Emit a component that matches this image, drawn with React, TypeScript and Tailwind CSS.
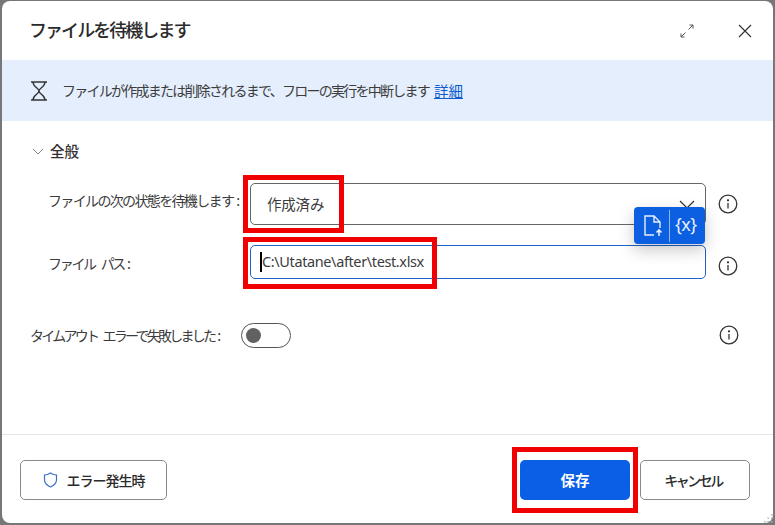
import React from 'react';

const cjk = 'font-["Noto_Sans_CJK_JP",sans-serif]';

function InfoIcon() {
    return (
        <svg width="20" height="20" viewBox="0 0 20 20" fill="none" stroke="#333" strokeWidth="1.3">
            <circle cx="10" cy="10" r="8.8" />
            <path d="M10 9v5.400" />
            <circle cx="10" cy="6.300" r="0.5" fill="#333" />
        </svg>
    );
}

function Hourglass() {
    return (
        <svg width="18" height="20" viewBox="0 0 18 20" fill="none" stroke="#333" strokeWidth="1.4">
            <path d="M1 1h16M1 19h16" />
            <path d="M3 1c0 5 6 6 6 9s-6 4-6 9M15 1c0 5-6 6-6 9s6 4 6 9" />
        </svg>
    );
}

function RedBox({ className }: { className: string }) {
    return <div className={`absolute border-[5px] border-[#f00000] ${className}`} />;
}

function Colon() {
    return <span className="ml-[3px] tracking-normal">:</span>;
}

export default function App() {
    return (
        <div className={`relative w-[775px] h-[525px] bg-[#777777] pt-[1px] px-[2px] pb-[2px] overflow-hidden ${cjk} text-[#323130]`}>
            <div className="flex flex-col h-full bg-white rounded-[8px] overflow-hidden">
                <div className="h-[59px] shrink-0 flex items-center pl-[27px] pr-[21px]">
                    <h1 className="text-[18px] font-medium tracking-[-1.95px] text-[#2b2b2b] -mt-[2px]">ファイルを待機します</h1>
                    <svg className="ml-auto mr-[44px]" width="14" height="14" viewBox="0 0 14 14" fill="none" stroke="#555" strokeWidth="1">
                        <path d="M8.500 5.500 13 1M9.500 1H13v3.500M5.500 8.500 1 13M1 9.500V13h3.500" />
                    </svg>
                    <svg width="14" height="14" viewBox="0 0 14 14" fill="none" stroke="#333" strokeWidth="1.2">
                        <path d="M1 1l12 12M13 1 1 13" />
                    </svg>
                </div>

                <div className="h-[61px] shrink-0 bg-[#e4eefd] flex items-center pl-[28px]">
                    <Hourglass />
                    <p className="ml-[14px] text-[14px] tracking-[-1.750px] text-[#3c3c3c] whitespace-nowrap">ファイルが作成または削除されるまで、フローの実行を中断します</p>
                    <a className="ml-[5px] text-[14.500px] text-[#0f5bd0] underline">詳細</a>
                </div>

                <div className="flex-1 flex flex-col pt-[20px]">
                    <div className="h-[20px] flex items-center pl-[30px]">
                        <svg width="12" height="7" viewBox="0 0 12 7" fill="none" stroke="#888" strokeWidth="1">
                            <path d="M1 1l5 5 5-5" />
                        </svg>
                        <span className="ml-[6px] text-[14.500px] font-medium">全般</span>
                    </div>

                    <div className="mt-[22px] flex items-center pl-[46px]">
                        <label className="w-[202px] text-[14px] tracking-[-1.650px] text-[#3c3c3c] whitespace-nowrap -mt-[8px]">ファイルの次の状態を待機します<Colon /></label>
                        <div className="w-[456px] h-[42px] border border-[#666666] rounded-[5px] flex items-center pl-[16px] pr-[10px]">
                            <span className="text-[14.500px] tracking-[-0.2px] text-[#3c3c3c]">作成済み</span>
                            <svg className="ml-auto" width="16" height="9" viewBox="0 0 16 9" fill="none" stroke="#333" strokeWidth="1.2">
                                <path d="M1 1l7 7 7-7" />
                            </svg>
                        </div>
                        <div className="ml-[12px]"><InfoIcon /></div>
                    </div>

                    <div className="mt-[20px] flex items-center pl-[46px]">
                        <label className="w-[202px] text-[14px] tracking-[-2.300px] [word-spacing:5px] text-[#3c3c3c] whitespace-nowrap mt-[2px]">ファイル パス<Colon /></label>
                        <div className="w-[456px] h-[34px] border border-[#1f62c8] rounded-[5px] flex items-center pl-[9px]">
                            <span className="w-[2px] h-[20px] bg-black" />
                            <span className="font-['Noto_Sans',sans-serif] text-[14.500px] tracking-[-0.38px] text-[#3c3c3c]">C:\Utatane\after\test.xlsx</span>
                        </div>
                        <div className="ml-[12px] mt-[8px]"><InfoIcon /></div>
                    </div>

                    <div className="mt-[44px] flex items-center pl-[28px]">
                        <label className="w-[211px] text-[14px] tracking-[-2.750px] [word-spacing:5px] text-[#3c3c3c] whitespace-nowrap">タイムアウト エラーで失敗しました<Colon /></label>
                        <div className="w-[50px] h-[25px] border border-[#555555] rounded-full flex items-center pl-[4px]">
                            <span className="w-[15px] h-[15px] rounded-full bg-[#616161]" />
                        </div>
                        <div className="ml-[428px] -mt-[1px]"><InfoIcon /></div>
                    </div>
                </div>

                <div className="h-[89px] shrink-0 border-t border-[#e4e4e4] flex items-center pl-[18px] pr-[23px] pt-[2px]">
                    <button className="w-[147px] h-[40px] border border-[#8a8a8a] rounded-[5px] flex items-center justify-center gap-[9px] text-[14px] font-medium tracking-[-1px] text-[#2b2b2b]">
                        <svg width="15" height="16" viewBox="0 0 15 16" fill="none" stroke="#3a6fd0" strokeWidth="1.2">
                            <path d="M7.500 1c2 1.400 4 2 6 2v5c0 3.500-3 5.600-6 7-3-1.400-6-3.500-6-7V3c2 0 4-.6 6-2z" />
                        </svg>
                        エラー発生時
                    </button>
                    <button className="ml-auto w-[110px] h-[40px] bg-[#0b5fe6] rounded-[5px] text-white text-[14.500px] font-bold">保存</button>
                    <button className="ml-[10px] w-[110px] h-[40px] border border-[#8a8a8a] rounded-[5px] pr-[4px] text-[14px] font-medium tracking-[-2.500px] text-[#2b2b2b]">キャンセル</button>
                </div>
            </div>

            {/* file / variable picker over the inputs */}
            <div className="absolute left-[634px] top-[207px] w-[71px] h-[37px] bg-[#0b5fe0] rounded-[4px] flex items-center shadow-[0_6px_16px_rgba(0,0,0,0.22)]">
                <svg className="ml-[9px]" width="20" height="22" viewBox="0 0 20 22" fill="none" stroke="#e6efff" strokeWidth="1.4">
                    <path d="M11 20H2V1h9l6 6v6M11 1v6h6" />
                    <path d="M16 21v-6M13.500 17.500 16 15l2.500 2.500" strokeWidth="1.600" />
                </svg>
                <span className="ml-[6px] w-[1px] h-[32px] bg-[#8fb6f5]" />
                <span className="ml-[5px] font-['Noto_Sans',sans-serif] text-[#e6efff] text-[18px] tracking-[-0.5px] -mt-[2px]">{'{x}'}</span>
            </div>

            {/* resize grip */}
            <svg className="absolute right-[2px] bottom-[2px]" width="10" height="10" viewBox="0 0 10 10" fill="#b5b5b5">
                <rect x="8" y="1" width="1.500" height="1.500" />
                <rect x="8" y="4.500" width="1.500" height="1.500" />
                <rect x="8" y="8" width="1.500" height="1.500" />
                <rect x="4.500" y="4.500" width="1.500" height="1.500" />
                <rect x="4.500" y="8" width="1.500" height="1.500" />
                <rect x="1" y="8" width="1.500" height="1.500" />
            </svg>

            <RedBox className="left-[243px] top-[175px] w-[101px] h-[58px]" />
            <RedBox className="left-[243px] top-[237px] w-[194px] h-[52px]" />
            <RedBox className="left-[512px] top-[447px] w-[126px] h-[66px]" />
        </div>
    );
}
